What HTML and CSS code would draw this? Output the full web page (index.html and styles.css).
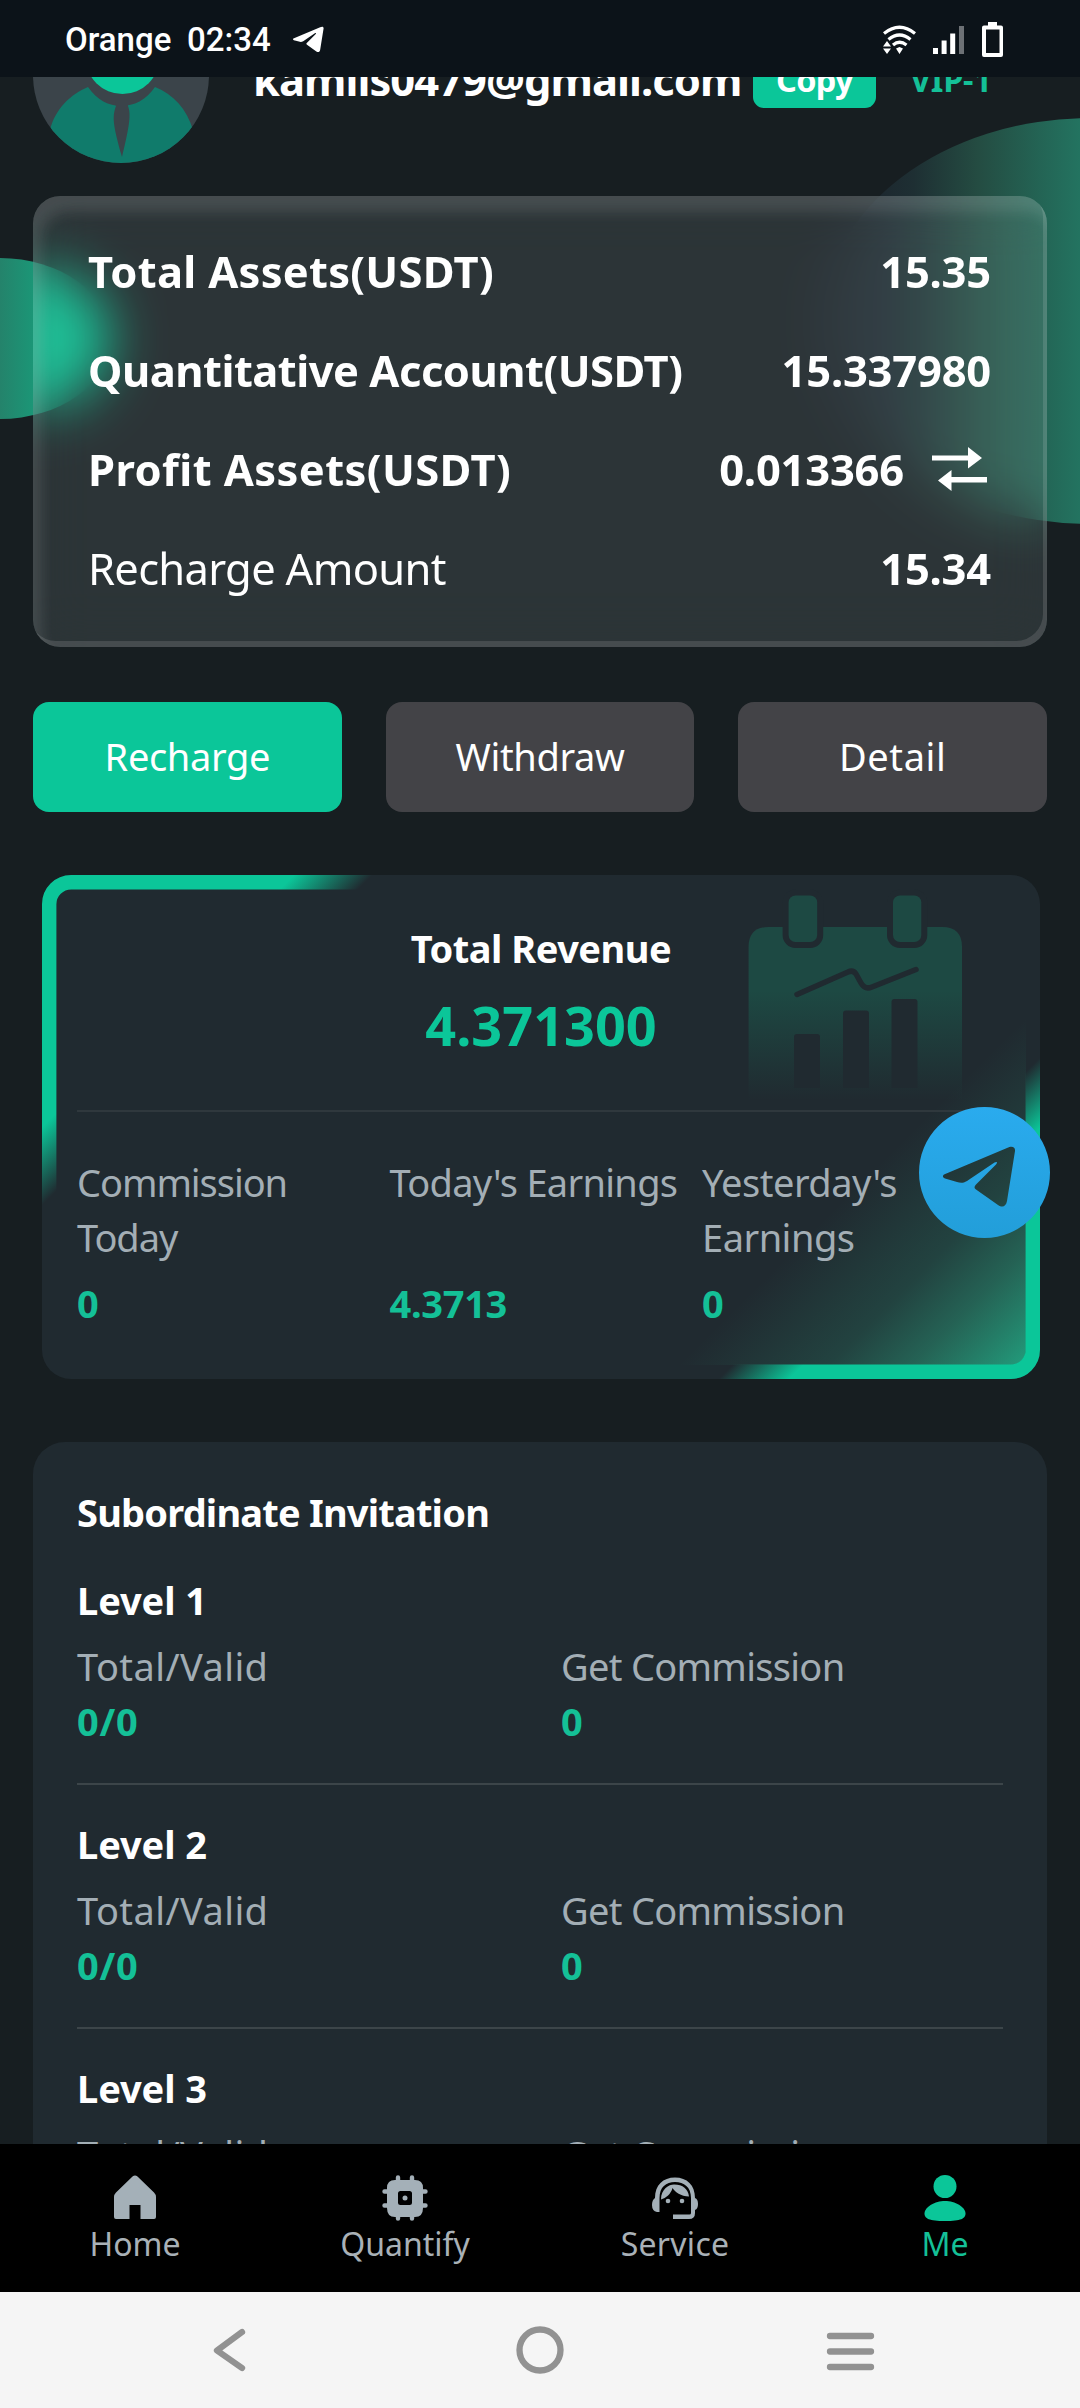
FILE: index.html
```html
<!DOCTYPE html>
<html lang="en">
<head>
<meta charset="utf-8">
<title>Me</title>
<link rel="stylesheet" href="styles.css">
</head>
<body>
<div class="screen">
  <header class="status">
    <span class="carrier">Orange</span>
    <span class="clock">02:34</span>
    <svg class="status-plane" viewBox="24 39 73 62"><path d="M25 67.500L88 41C93 38.500 96.500 40 96 44L88 94C87 99.500 83.500 101 79 98L57 82.500C55 81 55 79.500 57 77.500L77 57.500C79 55.500 78 54 75.500 55.500L48 74C44 76.500 41 76 38 75L26 71.500C23.500 70.500 23.500 68.500 25 67.500Z"/></svg>
    <span class="status-icons">
      <svg class="wifi" viewBox="0 0 33 29"><g fill="none" stroke="#fff" stroke-width="3.200"><path d="M1 8.500Q16.500-4 32 8.500"/><path d="M5.500 14.500Q16.500 5.500 27.500 14.500"/><path d="M10 20Q16.500 14.500 23.500 20"/></g><path d="M4 16l4 5.500H0zM0 23.500h8L4 29zM13 23.500l3.500-1.500 3.500 1.500-3.500 5.500z"/></svg>
      <svg class="signal" viewBox="0 0 31 28"><path d="M0 22h5v6H0zM8.600 14.500h5V28h-5zM17.200 7.500h5V28h-5z"/><path d="M26 0h5v28h-5z" opacity=".4"/></svg>
      <svg class="battery" viewBox="0 0 21 35"><path fill-rule="evenodd" d="M6 0h9v3.500h4q2 0 2 2V33q0 2-2 2H2q-2 0-2-2V5.500q0-2 2-2h4zM4 7.500V31h13.500V7.500z"/></svg>
    </span>
  </header>

  <main class="content">
    <div class="orb orb-right"></div>
    <div class="orb orb-left"></div>

    <section class="profile">
      <svg class="avatar" viewBox="0 0 176 176"><defs><clipPath id="round"><circle cx="88" cy="88" r="88"/></clipPath></defs><g clip-path="url(#round)"><path fill="#3b444a" d="M0 0h176v176H0z"/><circle cx="89.500" cy="70" r="37" fill="#0bc699"/><path fill="#107b6b" d="M17 143C22 122 38 107 55 100C64 113 76 119 88 119C101 119 113 113 122 100C140 107 154 122 160 143V176H17Z"/><path fill="#3b444a" d="M82 114H95L95 119C98 127 97 137 89 170C80 138 79 130 83 119Z"/></g></svg>
      <span class="email">kamlis0479@gmail.com</span>
      <button class="copy">Copy</button>
      <span class="vip">VIP-1</span>
    </section>

    <section class="assets">
      <div class="asset"><b class="ls-1">Total Assets(USDT)</b><b class="num">15.35</b></div>
      <div class="asset"><b class="ls-2">Quantitative Account(USDT)</b><b class="num">15.337980</b></div>
      <div class="asset"><b class="ls-3">Profit Assets(USDT)</b><span class="pair"><b class="num">0.013366</b><svg class="swap" viewBox="0 0 55 44"><path d="M0 8.500h36V0l14 11-14 10.500V13.500H0zM55 30H19.500v-7L6 33.500 19.500 44v-8.500H55z"/></svg></span></div>
      <div class="asset"><span class="ls-5">Recharge Amount</span><b class="num">15.34</b></div>
    </section>

    <div class="actions">
      <button class="action primary">Recharge</button>
      <button class="action">Withdraw</button>
      <button class="action wide">Detail</button>
    </div>

    <section class="revenue">
      <svg class="frame" viewBox="0 0 998 504">
        <defs>
          <linearGradient id="edge" gradientUnits="userSpaceOnUse" x1="0" y1="0" x2="751" y2="751"><stop offset=".168" stop-color="#0bc699"/><stop offset=".22" stop-color="#0bc699" stop-opacity="0"/><stop offset=".786" stop-color="#0bc699" stop-opacity="0"/><stop offset=".833" stop-color="#0bc699"/></linearGradient>
          <linearGradient id="glow" gradientUnits="userSpaceOnUse" x1="0" y1="0" x2="751" y2="751"><stop offset=".75" stop-color="#2aa580" stop-opacity="0"/><stop offset=".85" stop-color="#2aa580" stop-opacity=".2"/><stop offset=".906" stop-color="#2aa580" stop-opacity=".46"/><stop offset=".98" stop-color="#22ab86" stop-opacity=".87"/></linearGradient>
          <linearGradient id="fade" gradientUnits="userSpaceOnUse" x1="0" y1="116" x2="0" y2="225"><stop offset="0" stop-color="#1d4943"/><stop offset="1" stop-color="#202a30"/></linearGradient>
        </defs>
        <rect width="998" height="504" rx="29" fill="#202a30"/>
        <g>
          <path fill="url(#fade)" d="M706.600 230V72q0-20 20-20H900q20 0 20 20V230z"/>
          <g fill="#1d4943" stroke="#202a30" stroke-width="12" paint-order="stroke"><rect x="746.600" y="20.500" width="28.600" height="46.500" rx="7"/><rect x="851" y="20.500" width="28.300" height="46.500" rx="7"/></g>
          <path fill="none" stroke="#202a30" stroke-width="5.500" stroke-linecap="round" stroke-linejoin="round" d="M755 119.500L806 97Q811 94.500 814 99L819 108Q823 115 830 112L874 94.500"/>
          <path fill="#202a30" d="M752 213V162q0-3 3-3h20q3 0 3 3V213zM801 213V138.500q0-3 3-3h20q3 0 3 3V213zM849.500 213V127q0-3 3-3h20q3 0 3 3V213z"/>
        </g>
        <rect x="14" y="14" width="970" height="476" rx="15" fill="url(#glow)"/>
        <rect x="7.200" y="7.200" width="983.600" height="489.600" rx="22" fill="none" stroke="url(#edge)" stroke-width="14.400"/>
      </svg>
      <h2 class="revenue-title">Total Revenue</h2>
      <div class="revenue-value">4.371300</div>
      <div class="earnings">
        <div class="earning"><p class="ls-4">Commission<br>Today</p><b>0</b></div>
        <div class="earning"><p class="ls-5">Today's Earnings</p><b>4.3713</b></div>
        <div class="earning"><p class="ls-2">Yesterday's Earnings</p><b>0</b></div>
      </div>
    </section>

    <section class="invite">
      <h2 class="invite-title">Subordinate Invitation</h2>
      <div class="level"><h3>Level 1</h3><div class="stats"><p class="ls-3">Total/Valid</p><p class="ls-5">Get Commission</p><b>0/0</b><b>0</b></div></div>
      <div class="level"><h3>Level 2</h3><div class="stats"><p class="ls-3">Total/Valid</p><p class="ls-5">Get Commission</p><b>0/0</b><b>0</b></div></div>
      <div class="level"><h3>Level 3</h3><div class="stats"><p class="ls-3">Total/Valid</p><p class="ls-5">Get Commission</p></div></div>
    </section>
  </main>

  <nav class="tabs">
    <a class="tab"><svg viewBox="0 0 46 46"><path d="M20.500 1.500Q23-.7 25.500 1.500L42 17.500Q44 19.500 44 22V42Q44 44 42 44H28.500V30H17.500V44H4Q2 44 2 42V22Q2 19.500 4 17.500Z"/></svg><span>Home</span></a>
    <a class="tab"><svg viewBox="0 0 46 46"><path fill-rule="evenodd" d="M13 5h20q8 0 8 8v20q0 9-8 9H13q-8 0-8-9V13q0-8 8-8zM18.500 16q-2.500 0-2.500 2.500v9q0 2.500 2.500 2.500h9q2.500 0 2.500-2.500v-9q0-2.500-2.500-2.500z"/><path fill="none" stroke="#a4b0b8" stroke-width="4.400" stroke-linecap="round" d="M16 2.500v5M30 2.500v5M16 38.500v5M30 38.500v5M2.500 16.500h5M2.500 30.500h5M38.500 16.500h5M38.500 30.500h5"/><circle cx="23" cy="23" r="2.500"/></svg><span>Quantify</span></a>
    <a class="tab ls-1"><svg viewBox="0 0 46 46"><path d="M3 23C3 10 11 2.500 23 2.500S43 10 43 23Q46 24 46 29T43 35V38Q43 44 37 44H21V39.500H37.500Q39 39.500 39 38V23C39 12 32 7 23 7S7.500 12 7.500 23V37H5Q0 36 0 30 0 25 3 23Z"/><path d="M9 24.500C9 14 17 9.500 22 9.500 31 9.500 36 14 37 21.500 29 21.500 23 17 20.500 13 19 19 14 23 9 24.500Z"/><circle cx="16" cy="26" r="2.300"/><circle cx="30" cy="26" r="2.300"/></svg><span>Service</span></a>
    <a class="tab active"><svg viewBox="0 0 46 46"><circle cx="23" cy="11.500" r="11.500"/><path d="M23 26C33 26 43.500 32 43.500 38.500C43.500 43.500 39 46 23 46S2.500 43.500 2.500 38.500C2.500 32 13 26 23 26Z"/></svg><span>Me</span></a>
  </nav>

  <footer class="system">
    <svg viewBox="0 0 50 50"><path d="M38 7L13 25.500 38 43"/></svg>
    <svg viewBox="0 0 50 50"><circle cx="25" cy="25" r="20.500"/></svg>
    <svg viewBox="0 0 50 50"><path d="M4 11H45M4 26.500H45M4 42H45"/></svg>
  </footer>

  <svg class="telegram" viewBox="0 0 131 131"><defs><linearGradient id="sky" x2="0" y2="1"><stop stop-color="#2aabee"/><stop offset="1" stop-color="#229ed9"/></linearGradient></defs><path fill="url(#sky)" fill-rule="evenodd" d="M65.500 0a65.500 65.500 0 0 1 0 131a65.500 65.500 0 0 1 0-131zM25 67.500L88 41C93 38.500 96.500 40 96 44L88 94C87 99.500 83.500 101 79 98L57 82.500C55 81 55 79.500 57 77.500L77 57.500C79 55.500 78 54 75.500 55.500L48 74C44 76.500 41 76 38 75L26 71.500C23.500 70.500 23.500 68.500 25 67.500Z"/></svg>
</div>
</body>
</html>
```
FILE: styles.css
```css
* { box-sizing: border-box; margin: 0; padding: 0; }
body { background: #171e21; color: #fff; font-family: "Noto Sans", "Open Sans", sans-serif; }
svg { display: block; flex: none; }
button { border: 0; color: #fff; font-family: inherit; }

.screen { position: relative; display: flex; flex-direction: column; width: 1080px; height: 2408px; overflow: hidden; }

/* letter-spacing steps */
.ls-1 { letter-spacing: .28px; }
.ls-2 { letter-spacing: -.5px; }
.ls-3 { letter-spacing: .42px; }
.ls-4 { letter-spacing: -1.05px; }
.ls-5 { letter-spacing: -.7px; }

/* status bar */
.status { flex: none; display: flex; align-items: center; height: 77px; padding: 2px 77px 0 65px; background: #0c1319; font: 500 33px/40px Roboto, sans-serif; fill: #fff; }
.carrier { width: 122px; }
.clock { width: 106px; }
.status-plane { width: 31px; height: 27px; }
.status-icons { display: flex; align-items: center; margin-left: auto; }
.wifi { width: 33px; height: 29px; }
.signal { width: 31px; height: 28px; margin: 0 18px 0 17px; }
.battery { width: 21px; height: 35px; }

/* scrolled page */
.content { position: relative; flex: 1; min-height: 0; overflow: hidden; background: #171e21; }
.orb { position: absolute; border-radius: 50%; }
.orb-right { left: 823px; top: 41px; width: 534px; height: 406px; background: linear-gradient(90deg, #1c252d 8%, #1e2f33 17%, #244c42 29%, #237360 48%); }
.orb-left { left: -110px; top: 181px; width: 220px; height: 161px; background: linear-gradient(90deg, #2a6a5a, #24836b 50%, #1b9777 66%, #02c090 78%); }

.profile { position: relative; display: flex; align-items: center; height: 184px; margin: -90px 33px 25px; font-weight: 700; }
.avatar { width: 176px; height: 176px; align-self: flex-start; margin-right: 44px; }
.email { width: 500px; font-size: 43.5px; line-height: 60px; letter-spacing: -.98px; }
.copy { width: 123px; height: 58px; margin-right: 34px; border-radius: 11px; background: #0bc699; font-size: 32.5px; font-weight: 700; letter-spacing: -.7px; }
.vip { color: #14c097; font-size: 32.5px; letter-spacing: -.3px; }

.assets { position: relative; height: 451px; margin: 0 33px; padding: 25px 56px 25px 55px; border-radius: 27px; background: rgba(240, 255, 252, .1); backdrop-filter: blur(27px); box-shadow: inset 8px 16px 14px rgba(255, 255, 255, .12), inset -4px -6px 0 rgba(255, 255, 255, .12); }
.asset { display: flex; justify-content: space-between; align-items: center; height: 99px; font-size: 43.5px; }
.num { letter-spacing: -.2px; }
.pair { display: flex; align-items: center; }
.pair .num { margin-right: 28px; }
.swap { width: 55px; height: 44px; margin-right: 4px; fill: #fff; }

.actions { display: grid; grid-template-columns: repeat(3, 1fr); gap: 44px; margin: 55px 33px 63px; }
.action { height: 110px; padding-bottom: 2px; border-radius: 16px; background: #434347; font-size: 38px; letter-spacing: -.35px; }
.action.primary { background: #0bc699; }
.action.wide { letter-spacing: .6px; }

/* revenue */
.revenue { position: relative; height: 504px; margin: 0 40px 63px 42px; padding: 46px 35px 0; }
.frame { position: absolute; left: 0; top: 0; width: 998px; height: 504px; }
.revenue > :not(.frame) { position: relative; }
.revenue-title { font-size: 38px; line-height: 54px; letter-spacing: -.5px; text-align: center; }
.revenue-value { height: 135px; color: #0bc699; font-size: 54px; font-weight: 700; line-height: 100px; text-align: center; }
.earnings { display: grid; grid-template-columns: repeat(3, 297px); gap: 15.5px; width: 926px; padding-top: 43px; border-top: 2px solid #2f383d; }
.earning { display: flex; flex-direction: column; font-size: 38px; line-height: 55px; }
.earning p { height: 110px; color: #a3aeb5; }
.earning b { margin-top: 11px; color: #14c097; letter-spacing: -.3px; }

/* invitation levels */
.invite { height: 900px; margin: 0 33px; padding: 42px 44px 0; border-radius: 32px; background: #202a30; font-size: 38px; line-height: 56px; }
.invite-title { height: 57px; font-size: 38px; letter-spacing: -.8px; }
.level { height: 244px; padding-top: 29px; border-bottom: 2px solid #3c4549; }
.level h3 { font-size: 38px; line-height: 60px; letter-spacing: -.1px; }
.stats { display: grid; grid-template-columns: 484px 1fr; padding-top: 8px; }
.stats p { color: #a3aeb5; }
.stats b { margin-top: -1px; color: #14c097; letter-spacing: .7px; }

/* app tabs */
.tabs { flex: none; display: grid; grid-template-columns: repeat(4, 1fr); height: 148px; padding-top: 31px; background: #000; }
.tab { display: flex; flex-direction: column; align-items: center; color: #a9b1b7; fill: #a4b0b8; font-size: 32px; line-height: 46px; }
.tab svg { width: 46px; height: 46px; }
.tab.active { color: #14c097; fill: #0bc699; }

/* system navigation */
.system { flex: none; display: grid; grid-template-columns: repeat(3, 1fr); place-items: center; height: 116px; padding: 0 74px; background: #f5f5f5; }
.system svg { width: 50px; height: 50px; fill: none; stroke: #929292; stroke-width: 6.300; stroke-linecap: round; stroke-linejoin: round; }

.telegram { position: absolute; left: 919px; top: 1107px; width: 131px; height: 131px; }
```
